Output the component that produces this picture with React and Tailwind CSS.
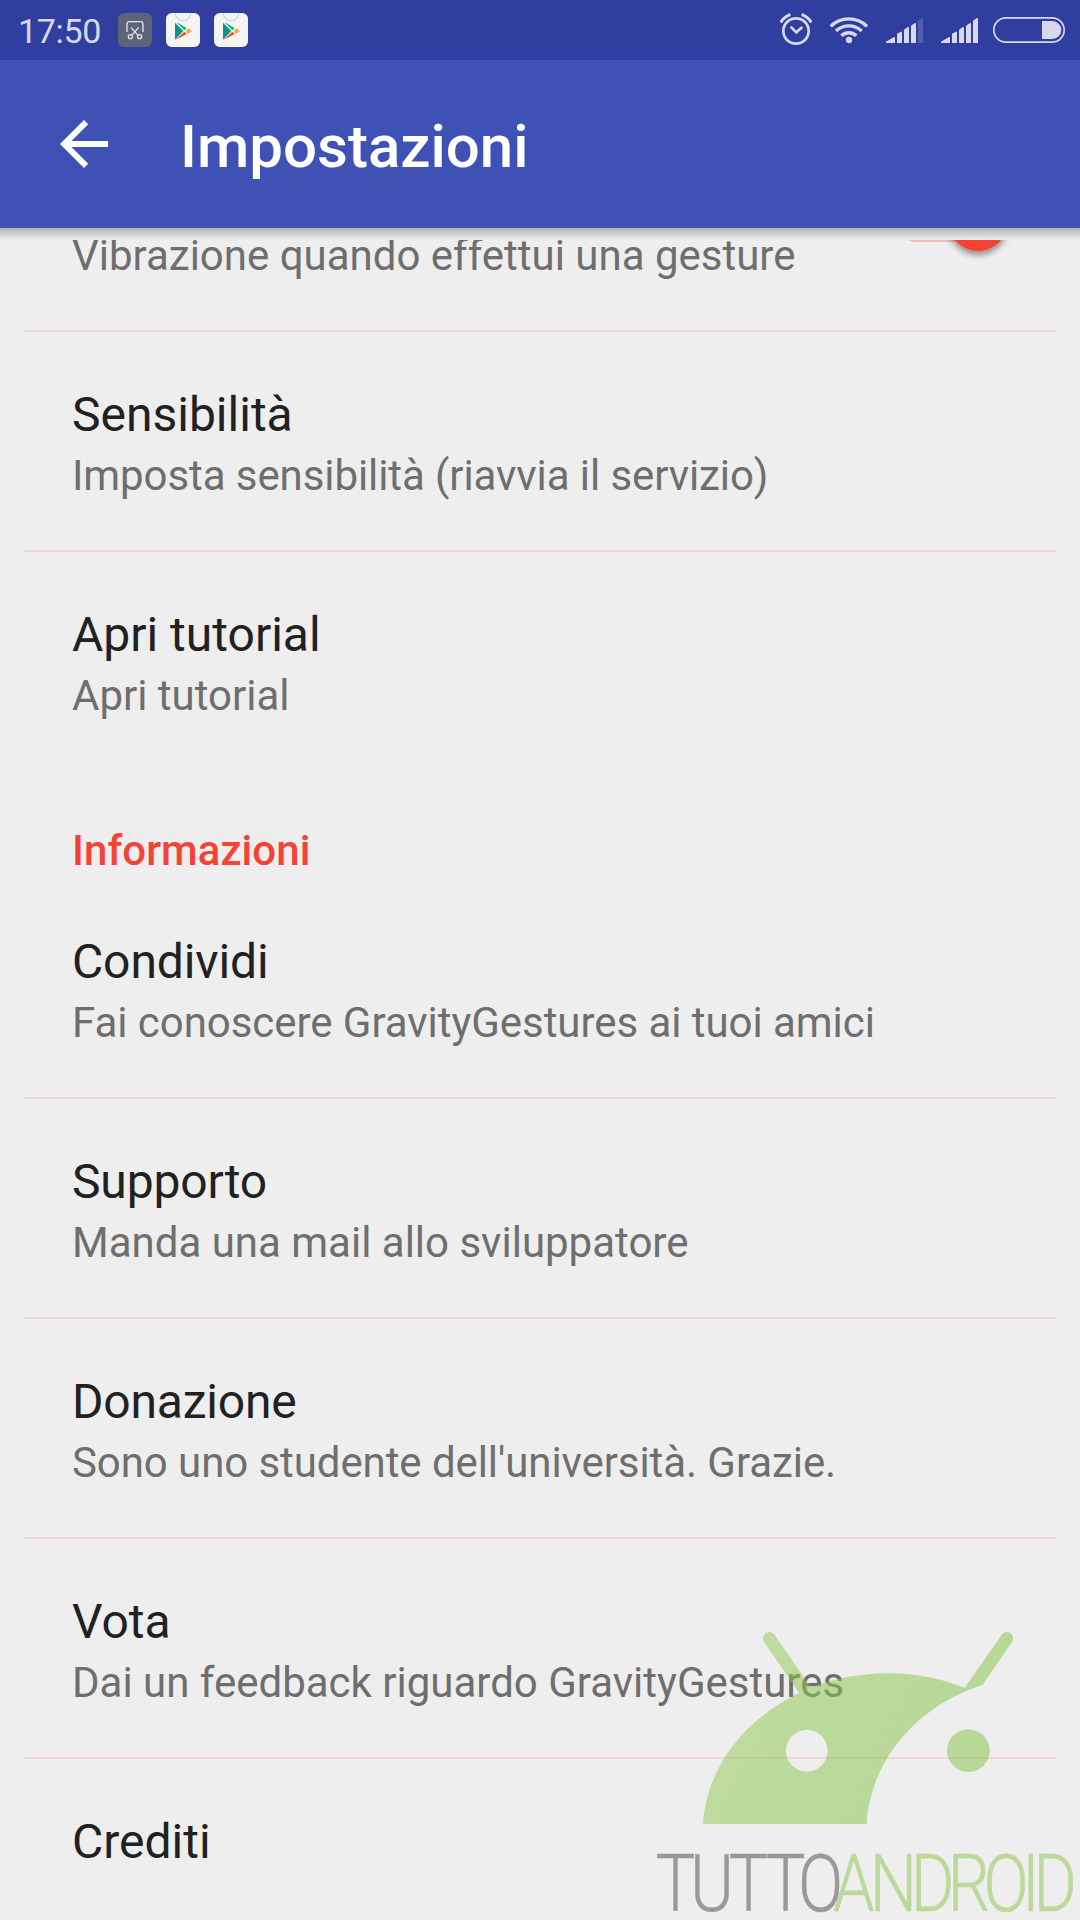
const sections = [
  {
    title: null,
    items: [
      { title: 'Sensibilità', summary: 'Imposta sensibilità (riavvia il servizio)', summaryClass: 'tracking-[-0.085px]' },
      { title: 'Apri tutorial', summary: 'Apri tutorial' }
    ]
  },
  {
    title: 'Informazioni',
    items: [
      {
        title: 'Condividi',
        titleClass: 'tracking-[-0.12px]',
        summary: 'Fai conoscere GravityGestures ai tuoi amici',
        summaryClass: 'tracking-[-0.05px]'
      },
      { title: 'Supporto', titleClass: 'tracking-[-0.15px]', summary: 'Manda una mail allo sviluppatore' },
      {
        title: 'Donazione',
        titleClass: 'tracking-[-0.2px]',
        summary: "Sono uno studente dell'università. Grazie.",
        summaryClass: 'tracking-[-0.08px]'
      },
      { title: 'Vota', summary: 'Dai un feedback riguardo GravityGestures' },
      { title: 'Crediti', summary: null }
    ]
  }
]

const ScreenshotIcon = () => (
  <svg className="w-[34px] h-[34px]" viewBox="0 0 102 102" fill="none" stroke="#e3e5ea" strokeWidth="4">
    <rect width="102" height="102" rx="19" fill="#5d6479" stroke="none" />
    <path d="M27 57V33q0-7 7-7h34q7 0 7 7v24" />
    <path d="M39 43l21 24M62 43L41 67" />
    <circle cx="37" cy="71" r="6" />
    <circle cx="65" cy="71" r="6" />
  </svg>
)

const PlayStoreIcon = () => (
  <svg className="w-[34px] h-[34px]" viewBox="0 0 102 102">
    <rect width="102" height="102" rx="17" fill="#f4f4f4" />
    <path d="M28 0a23 23 0 0 0 46 0" fill="none" stroke="#d2d2d2" strokeWidth="3.5" />
    <path d="M27 29v51l25-26z" fill="#10927c" />
    <path d="M31 27l31 18-7 7z" fill="#0bb391" />
    <path d="M29 80l26-24 8 7z" fill="#ea4c40" />
    <path d="M66 46l13 8-13 9-7-9z" fill="#f0b058" />
  </svg>
)

const AlarmIcon = () => (
  <svg className="w-8 h-[60px]" viewBox="60 0 96 180" fill="none" stroke="#d6d9ec" strokeWidth="8">
    <circle cx="108" cy="93" r="38" />
    <path d="M62 67q10-16 29-24M154 67q-10-16-29-24" strokeWidth="9" />
    <path d="M92 80l17 17 18-16" />
  </svg>
)

const WifiIcon = () => (
  <svg className="w-10 h-[60px]" viewBox="207 0 120 180" fill="none" stroke="#d6d9ec" strokeWidth="10">
    <path d="M212 79a78 78 0 0 1 109 0" />
    <path d="M228 93a56 56 0 0 1 77 0" />
    <path d="M244 107a33 33 0 0 1 45 0" />
    <circle cx="267" cy="120" r="9.5" fill="#d6d9ec" stroke="none" />
  </svg>
)

const SignalIcon = ({ full }) => (
  <svg className="w-[37px] h-[60px]" viewBox="0 0 111 180" fill="#d6d9ec">
    <path d="M0 129v-4l24-14q3-1 3 2v16z" />
    <path d="M33 129v-28l12-6q3-1 3 2v32z" />
    <path d="M54 129V89l12-8q3-1 3 2v46z" />
    <path d="M75 129V77l12-8q3-1 3 2v58z" />
    <path d="M96 129V62l12-8q3-1 3 2v73z" opacity={full ? 1 : 0.2} />
  </svg>
)

const BatteryIcon = () => (
  <svg className="w-[72px] h-[60px]" viewBox="699 0 216 180" fill="none">
    <rect x="701.5" y="53.5" width="211" height="73" rx="36.5" stroke="#d6d9ec" strokeWidth="5" />
    <path d="M846 63h31a27 27 0 0 1 0 54h-31z" fill="#d6d9ec" />
  </svg>
)

const StatusBar = () => (
  <div className="h-[60px] bg-[#303f9f] flex items-center pl-[18px] pr-[15px]">
    <span className="w-[100px] pt-px text-[34px] leading-[40px] tracking-[-0.3px] text-[#d6d9ec]">17:50</span>
    <div className="flex gap-[14px]">
      <ScreenshotIcon />
      <PlayStoreIcon />
      <PlayStoreIcon />
    </div>
    <div className="ml-auto flex">
      <AlarmIcon />
      <div className="ml-[17px]"><WifiIcon /></div>
      <div className="ml-[17px]"><SignalIcon /></div>
      <div className="ml-[18px]"><SignalIcon full /></div>
      <div className="ml-[15px]"><BatteryIcon /></div>
    </div>
  </div>
)

const AppBar = () => (
  <header className="h-[168px] bg-[#3f51b5] flex items-center pl-12">
    <svg className="w-[72px] h-[72px]" viewBox="0 0 24 24" fill="#fff">
      <path d="M20 11H7.83l5.59-5.59L12 4l-8 8 8 8 1.41-1.41L7.83 13H20z" />
    </svg>
    <h1 className="ml-[60px] pt-[5px] text-[60px] leading-[70px] font-medium text-white">Impostazioni</h1>
  </header>
)

// Only the lower edge of the switch shows while the row is scrolled under the bar
const SwitchEdge = () => (
  <svg className="w-[130px] h-[40px]" viewBox="890 240 130 40">
    <defs>
      <filter id="thumbShadow" x="-50%" y="-50%" width="200%" height="200%">
        <feDropShadow dx="0" dy="4" stdDeviation="3" floodColor="#000" floodOpacity="0.4" />
      </filter>
    </defs>
    <rect x="896" y="200" width="110" height="42" rx="21" fill="#f44336" opacity="0.3" />
    <circle cx="978" cy="221" r="30" fill="#f44336" filter="url(#thumbShadow)" />
  </svg>
)

const Preference = ({ title, titleClass = '', summary, summaryClass = '', divider }) => (
  <div className={`h-[220px] mx-6 px-12 pt-[55px] border-b-2 ${divider ? 'border-[#f0d7d6]' : 'border-transparent'}`}>
    <div className={`text-[48px] leading-[56px] text-[#212121] ${titleClass}`}>{title}</div>
    {summary && <div className={`mt-2 text-[42px] leading-[50px] text-[#6e6e6e] ${summaryClass}`}>{summary}</div>}
  </div>
)

const Watermark = () => (
  <svg className="absolute left-[640px] top-[1600px] w-[440px] h-[320px] opacity-[0.52]" viewBox="0 0 1320 960">
    <defs>
      <linearGradient id="droid" gradientUnits="userSpaceOnUse" x1="200" y1="300" x2="850" y2="600">
        <stop offset="0" stopColor="#97ca59" />
        <stop offset="1" stopColor="#86c44b" />
      </linearGradient>
    </defs>
    <path
      fill="url(#droid)"
      fillRule="evenodd"
      d="M189 672C199 510 305 362 477 279L372 125C360 105 388 83 404 105L512 262C660 206 835 205 974 264L1083 107C1100 83 1128 102 1116 126L1028 254C820 322 690 490 680 672ZM438 452a62.5 62.5 0 1 0 125 0a62.5 62.5 0 1 0-125 0Z"
    />
    <circle cx="985" cy="452" r="64" fill="#86c44b" />
    <g fontFamily="Roboto" fontWeight="300" fontSize="241" strokeWidth="1.5" transform="scale(0.83 1)">
      <text y="933" x="56 181 321 455 571" fill="#4d4d4d" stroke="#4d4d4d">TUTTO</text>
      <text y="933" x="698 830 979 1112 1242 1381 1421" fill="#8cc750" stroke="#8cc750">ANDROID</text>
    </g>
  </svg>
)

const App = () => {
  return (
    <div className="relative w-[1080px] h-[1920px] overflow-hidden bg-[#eeeeee] flex flex-col font-[Roboto,sans-serif]">
      <StatusBar />
      <AppBar />
      <div className="h-3 shrink-0 bg-linear-to-b from-[#b0b0b0] to-[#eeeeee]" />

      <main className="flex-1 overflow-hidden">
        <div className="h-[92px] mx-6 pl-12 pr-9 overflow-hidden flex justify-between border-b-2 border-[#f0d7d6]">
          <div className="-mt-[9px] text-[42px] leading-[50px] text-[#6e6e6e]">Vibrazione quando effettui una gesture</div>
          <SwitchEdge />
        </div>
        {sections.map((section, i) => (
          <section key={i}>
            {section.title && (
              <h2 className="h-[107px] pl-[72px] pt-[54px] text-[42px] leading-[50px] tracking-[0.06px] font-medium text-[#f44336]">
                {section.title}
              </h2>
            )}
            {section.items.map((item, j) => (
              <Preference key={item.title} {...item} divider={j < section.items.length - 1} />
            ))}
          </section>
        ))}
      </main>

      <Watermark />
    </div>
  )
}

export default App
